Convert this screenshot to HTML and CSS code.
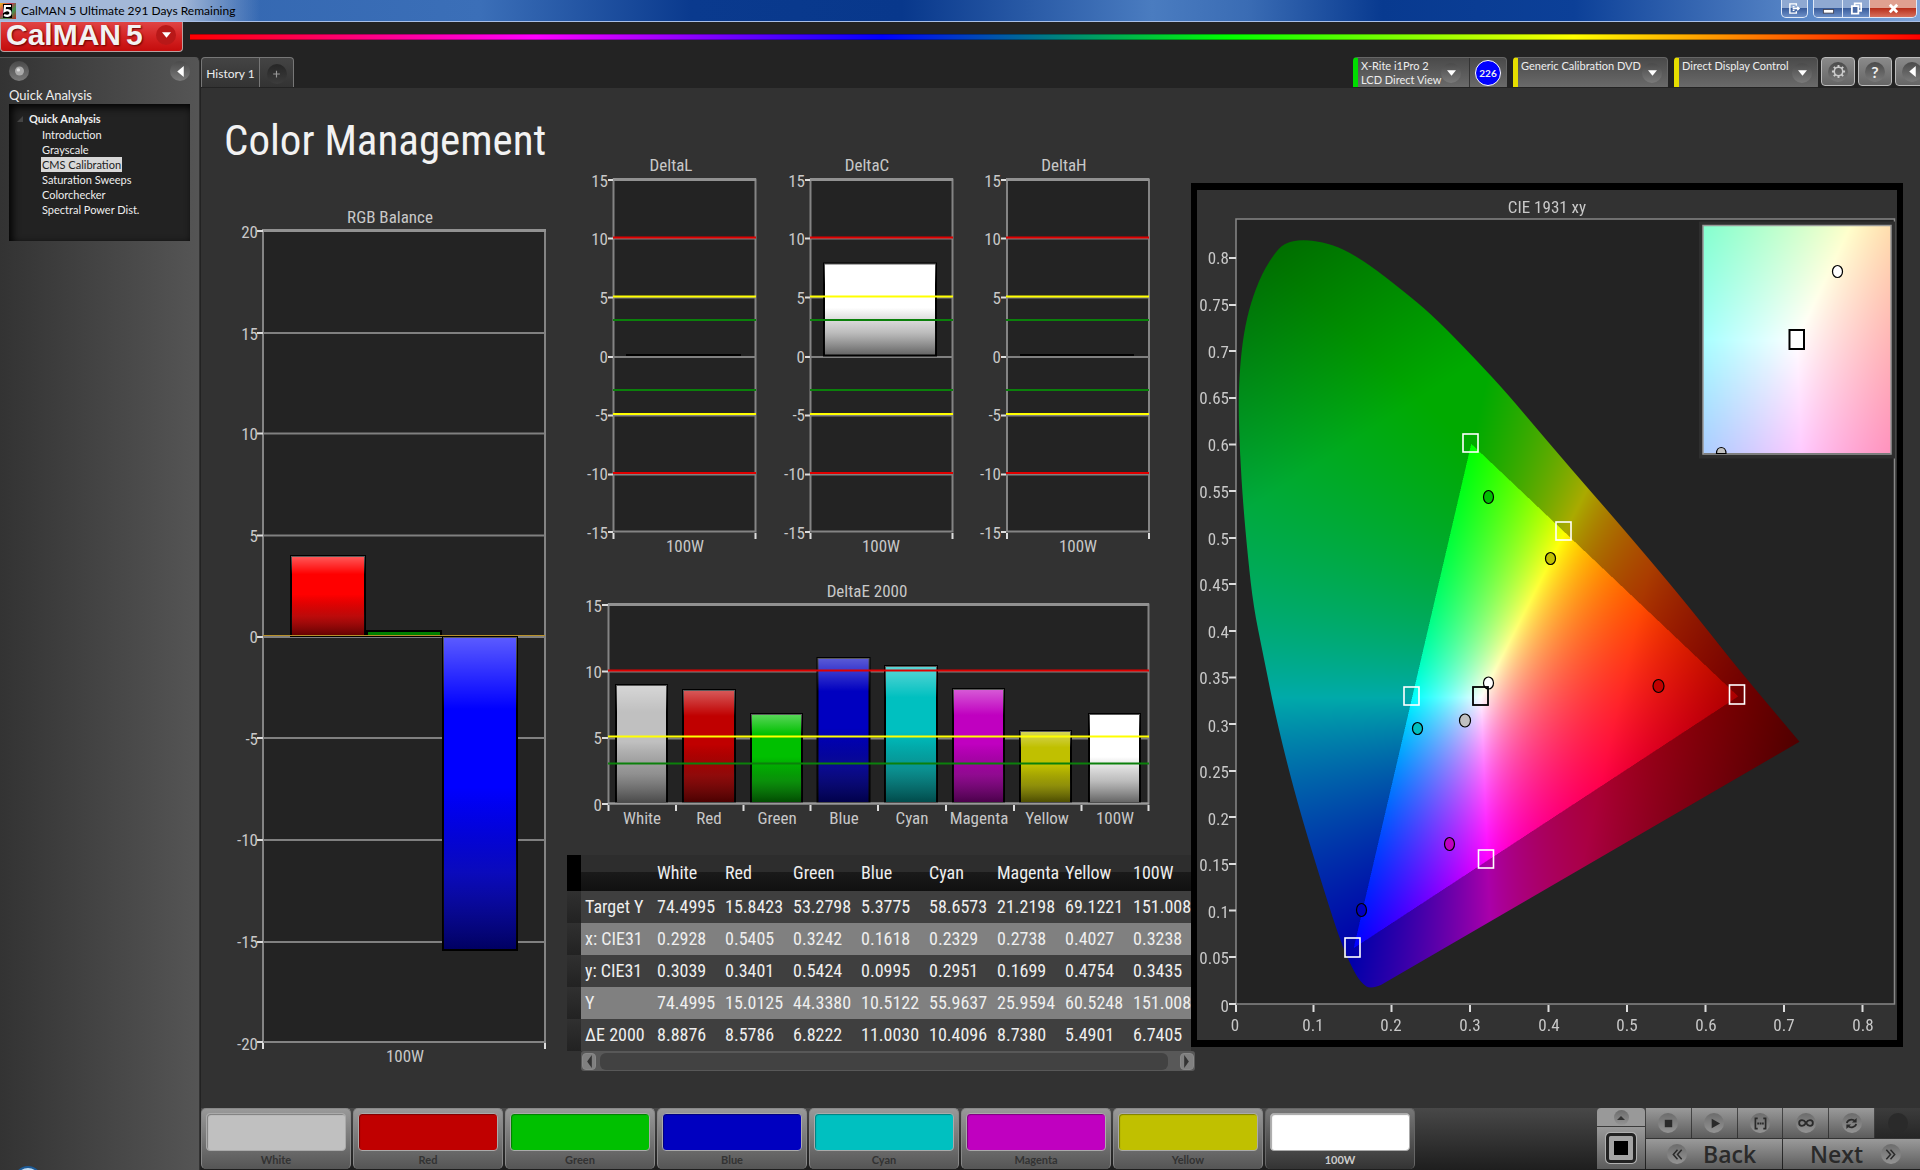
FILE: index.html
```
<!DOCTYPE html>
<html lang="en">
<head>
<meta charset="utf-8">
<meta name="viewport" content="width=device-width, initial-scale=1">
<title>CalMAN 5 Ultimate</title>
<link rel="stylesheet" href="styles.css">
</head>
<body>
<header class="titlebar">
  <svg class="app-icon" viewBox="0 0 16 16" aria-hidden="true">
    <defs><linearGradient id="app-rainbow" x1="0" y1="0" x2="1" y2="1"><stop offset="0" stop-color="#e8c020"/><stop offset=".35" stop-color="#d03050"/><stop offset=".65" stop-color="#3a9a50"/><stop offset="1" stop-color="#c02020"/></linearGradient></defs>
    <rect width="16" height="16" fill="url(#app-rainbow)"/><rect x="3" y="1" width="9" height="14" fill="#000"/>
    <path d="M11 3H5L4.500 8C7 6.500 10.500 7 10.500 10S7 13.500 4 12" fill="none" stroke="#fff" stroke-width="2.200"/>
  </svg>
  <span class="titlebar-text">CalMAN 5 Ultimate 291 Days Remaining</span>
  <div class="window-buttons">
    <button class="win-btn win-switch" aria-label="Switch monitor"><svg viewBox="0 0 14 14"><path d="M9 4V2H2v10h7v-2M5 5h2M5 9h2M5 7h7M10 5l2 2-2 2" fill="none" stroke="#fff" stroke-width="1.500"/></svg></button>
    <div class="win-group">
      <button class="win-btn win-min" aria-label="Minimize"><svg viewBox="0 0 14 14"><rect x="1.500" y="8" width="11" height="4" fill="#fff" stroke="#445"/></svg></button>
      <button class="win-btn win-max" aria-label="Restore"><svg viewBox="0 0 14 14"><path d="M5 1.500h7v8H5z" fill="none" stroke="#fff" stroke-width="1.800"/><path d="M2 4.500h7v8H2z" fill="#4a6aa5" stroke="#fff" stroke-width="2"/></svg></button>
      <button class="win-btn win-close" aria-label="Close"><svg viewBox="0 0 14 14"><path d="M3 3l8 8M11 3l-8 8" stroke="#fff" stroke-width="3"/></svg></button>
    </div>
  </div>
</header>

<div class="brandbar">
  <button class="brand" aria-label="CalMAN 5 menu">
    <span class="brand-name">CalMAN</span><span class="brand-name">5</span>
    <span class="round brand-arrow"><svg viewBox="0 0 10 6"><path d="M0 0h10L5 6z" fill="#fff"/></svg></span>
  </button>
  <div class="rainbow"></div>
</div>

<div class="app">
  <aside class="sidebar">
    <div class="sidebar-tools">
      <button class="round" aria-label="Pin"><svg viewBox="0 0 8 8"><circle cx="4" cy="4" r="4" fill="#aaa"/><circle cx="3" cy="3" r="1.500" fill="#ddd"/></svg></button>
      <button class="round" aria-label="Collapse"><svg class="arrow-left" viewBox="0 0 8 12"><path d="M7 1v10L1 6z" fill="#fff"/></svg></button>
    </div>
    <h2 class="sidebar-title">Quick Analysis</h2>
    <nav class="tree" aria-label="Workflow">
      <p class="tree-root"><svg viewBox="0 0 6 6" aria-hidden="true"><path d="M6 0v6H0z" fill="#444"/></svg>Quick Analysis</p>
      <ul class="tree-list">
        <li><a href="#introduction">Introduction</a></li>
        <li><a href="#grayscale">Grayscale</a></li>
        <li><a href="#cms" class="is-current" aria-current="page">CMS Calibration</a></li>
        <li><a href="#sweeps">Saturation Sweeps</a></li>
        <li><a href="#colorchecker">Colorchecker</a></li>
        <li><a href="#spd">Spectral Power Dist.</a></li>
      </ul>
    </nav>
    <span class="orb"></span>
  </aside>

  <main class="workspace">
    <div class="tabbar">
      <div class="tabs">
        <button class="tab">History 1</button>
        <button class="tab tab-add" aria-label="Add history"><span class="round add-round"><svg viewBox="0 0 8 8"><path d="M4 1v6M1 4h6" stroke="#999" stroke-width="1"/></svg></span></button>
      </div>
      <div class="devices">
        <div class="device device-meter">
          <button class="device-pick"><span>X-Rite i1Pro 2<br>LCD Direct View</span><span class="round"><svg viewBox="0 0 10 6"><path d="M0 0h10L5 6z" fill="#fff"/></svg></span></button>
          <span class="device-count">226</span>
        </div>
        <label class="device device-source"><select aria-label="Source"><option>Generic Calibration DVD</option></select><span class="round"><svg viewBox="0 0 10 6"><path d="M0 0h10L5 6z" fill="#fff"/></svg></span></label>
        <label class="device device-display"><select aria-label="Display"><option>Direct Display Control</option></select><span class="round"><svg viewBox="0 0 10 6"><path d="M0 0h10L5 6z" fill="#fff"/></svg></span></label>
        <button class="tool" aria-label="Settings"><span class="round"><svg class="tool-icon" viewBox="0 0 16 16"><circle cx="8" cy="8" r="4.500" fill="none" stroke="#ccc" stroke-width="1.600"/><path d="M8 1v2.500M8 12.500V15M1 8h2.500M12.500 8H15M3 3l1.800 1.800M11.200 11.200L13 13M13 3l-1.800 1.800M4.800 11.200L3 13" stroke="#ccc" stroke-width="2"/></svg></span></button>
        <button class="tool tool-help" aria-label="Help"><span class="round">?</span></button>
        <button class="tool tool-last" aria-label="Collapse panel"><span class="round"><svg class="arrow-left" viewBox="0 0 8 12"><path d="M7 1v10L1 6z" fill="#fff"/></svg></span></button>
      </div>
    </div>

    <div class="board">
      <section class="col-left">
        <h1 class="page-title">Color Management</h1>
        <svg class="chart" viewBox="201 200 366 880" role="img" aria-label="RGB Balance">
          <defs>
            <linearGradient id="gloss" x1="0" y1="0" x2="0" y2="1">
              <stop offset="0" stop-color="#fff" stop-opacity=".36"/><stop offset=".23" stop-color="#fff" stop-opacity="0"/>
              <stop offset=".48" stop-color="#000" stop-opacity="0"/><stop offset=".75" stop-color="#222" stop-opacity=".3"/><stop offset="1" stop-color="#000" stop-opacity=".62"/>
            </linearGradient>
          </defs>
          <rect class="plot" x="263" y="231" width="282" height="811"/>
          <path class="grid" d="M263 333h282M263 433.500h282M263 535.500h282M263 637h282M263 738h282M263 840h282M263 942h282"/>
          <path class="frame-top" d="M262 230.500h284"/>
          <path class="tick" d="M257 231h6M257 333h6M257 433.500h6M257 535.500h6M257 637h6M257 738h6M257 840h6M257 942h6M257 1042h6M263 1043v6M545 1043v6"/>
          <rect class="bar" x="291" y="556" width="74" height="80" fill="#f00"/><rect x="291" y="556" width="74" height="80" fill="url(#gloss)"/>
          <rect class="bar" x="367" y="631" width="74" height="5" fill="#008000"/>
          <rect class="bar" x="443" y="637" width="74" height="313" fill="#00f"/><rect x="443" y="637" width="74" height="313" fill="url(#gloss)"/>
          <path d="M263 635.500h282" stroke="#b8902a" stroke-width="1"/>
          <g class="label">
            <text x="390" y="223" text-anchor="middle">RGB Balance</text>
            <g text-anchor="end">
              <text x="258" y="238">20</text><text x="258" y="340">15</text><text x="258" y="440">10</text><text x="258" y="542">5</text><text x="258" y="643">0</text>
              <text x="258" y="745">-5</text><text x="258" y="846">-10</text><text x="258" y="948">-15</text><text x="258" y="1050">-20</text>
            </g>
            <text x="405" y="1062" text-anchor="middle">100W</text>
          </g>
        </svg>
      </section>

      <section class="col-mid">
        <div class="deltas">
          <svg class="chart" viewBox="0 0 197 410" role="img" aria-label="DeltaL">
            <rect class="plot" x="38.500" y="29.500" width="142" height="352"/>
            <path class="grid" d="M38 88.500h143M38 147.500h143M38 207h143M38 265.500h143M38 324.500h143"/>
            <path class="frame-top" d="M38 29.500h143"/>
            <path class="tick" d="M33 30h5M33 88.500h5M33 147.500h5M33 207h5M33 265.500h5M33 324.500h5M33 382h5M38.500 383v6M180.500 383v6"/>
            <rect x="51" y="204" width="115" height="2" fill="#000"/>
            <path class="lim-red" d="M38 87.500h143M38 323h143"/><path class="lim-yellow" d="M38 146.500h143M38 264h143"/><path class="lim-green" d="M38 170h143M38 240h143"/>
            <g class="label">
              <text x="96" y="21" text-anchor="middle">DeltaL</text>
              <g text-anchor="end"><text x="33" y="37">15</text><text x="33" y="95">10</text><text x="33" y="154">5</text><text x="33" y="213">0</text><text x="33" y="271">-5</text><text x="33" y="330">-10</text><text x="33" y="389">-15</text></g>
              <text x="110" y="402" text-anchor="middle">100W</text>
            </g>
          </svg>
          <svg class="chart" viewBox="0 0 197 410" role="img" aria-label="DeltaC">
            <rect class="plot" x="38.500" y="29.500" width="142" height="352"/>
            <path class="grid" d="M38 88.500h143M38 147.500h143M38 207h143M38 265.500h143M38 324.500h143"/>
            <path class="frame-top" d="M38 29.500h143"/>
            <path class="tick" d="M33 30h5M33 88.500h5M33 147.500h5M33 207h5M33 265.500h5M33 324.500h5M33 382h5M38.500 383v6M180.500 383v6"/>
            <rect class="bar" x="52" y="113.500" width="112" height="92" fill="#fff"/><rect x="52" y="113.500" width="112" height="92" fill="url(#gloss)"/>
            <path class="lim-red" d="M38 87.500h143M38 323h143"/><path class="lim-yellow" d="M38 146.500h143M38 264h143"/><path class="lim-green" d="M38 170h143M38 240h143"/>
            <g class="label">
              <text x="95" y="21" text-anchor="middle">DeltaC</text>
              <g text-anchor="end"><text x="33" y="37">15</text><text x="33" y="95">10</text><text x="33" y="154">5</text><text x="33" y="213">0</text><text x="33" y="271">-5</text><text x="33" y="330">-10</text><text x="33" y="389">-15</text></g>
              <text x="109" y="402" text-anchor="middle">100W</text>
            </g>
          </svg>
          <svg class="chart" viewBox="0 0 197 410" role="img" aria-label="DeltaH">
            <rect class="plot" x="38" y="29.500" width="142" height="352"/>
            <path class="grid" d="M37 88.500h143M37 147.500h143M37 207h143M37 265.500h143M37 324.500h143"/>
            <path class="frame-top" d="M37 29.500h143"/>
            <path class="tick" d="M32 30h5M32 88.500h5M32 147.500h5M32 207h5M32 265.500h5M32 324.500h5M32 382h5M38 383v6M180 383v6"/>
            <rect x="51" y="204" width="114" height="2" fill="#000"/>
            <path class="lim-red" d="M37 87.500h143M37 323h143"/><path class="lim-yellow" d="M37 146.500h143M37 264h143"/><path class="lim-green" d="M37 170h143M37 240h143"/>
            <g class="label">
              <text x="95" y="21" text-anchor="middle">DeltaH</text>
              <g text-anchor="end"><text x="32" y="37">15</text><text x="32" y="95">10</text><text x="32" y="154">5</text><text x="32" y="213">0</text><text x="32" y="271">-5</text><text x="32" y="330">-10</text><text x="32" y="389">-15</text></g>
              <text x="109" y="402" text-anchor="middle">100W</text>
            </g>
          </svg>
        </div>

        <svg class="chart" viewBox="567 560 624 280" role="img" aria-label="DeltaE 2000">
          <rect class="plot" x="608.500" y="604.500" width="540" height="199"/>
          <path class="grid" d="M609 671.500h540M609 738.500h540"/>
          <path class="frame-top" d="M608 604.500h541"/>
          <path class="tick" d="M602 605h6M602 671.500h6M602 738h6M602 804h6M608.500 805v6M676 805v6M743.500 805v6M810.500 805v6M878 805v6M946 805v6M1014 805v6M1081.500 805v6M1148.500 805v6"/>
          <g class="bar"><rect x="616" y="685" width="51" height="118" fill="#c0c0c0"/><rect x="683" y="690" width="52" height="113" fill="#c00000"/><rect x="751" y="714" width="51" height="89" fill="#00c000"/><rect x="817.500" y="658" width="52" height="145" fill="#0000c0"/><rect x="885" y="666" width="52" height="137" fill="#00c0c0"/><rect x="953" y="689" width="51" height="114" fill="#c000c0"/><rect x="1020" y="731" width="51" height="72" fill="#c0c000"/><rect x="1089" y="714" width="51" height="89" fill="#fff"/></g>
          <g fill="url(#gloss)"><rect x="616" y="685" width="51" height="118"/><rect x="683" y="690" width="52" height="113"/><rect x="751" y="714" width="51" height="89"/><rect x="817.500" y="658" width="52" height="145"/><rect x="885" y="666" width="52" height="137"/><rect x="953" y="689" width="51" height="114"/><rect x="1020" y="731" width="51" height="72"/><rect x="1089" y="714" width="51" height="89"/></g>
          <path d="M608 803.500h541" stroke="#999" stroke-width="2"/>
          <path class="lim-red" d="M608 670.500h541"/><path class="lim-yellow" d="M608 736.500h541"/><path class="lim-green" d="M608 763.500h541"/>
          <g class="label">
            <g text-anchor="end"><text x="602" y="612">15</text><text x="602" y="678">10</text><text x="602" y="744">5</text><text x="602" y="811">0</text></g>
            <g text-anchor="middle">
              <text x="867" y="597">DeltaE 2000</text>
              <text x="642" y="824">White</text><text x="709" y="824">Red</text><text x="777" y="824">Green</text><text x="844" y="824">Blue</text><text x="912" y="824">Cyan</text><text x="979" y="824">Magenta</text><text x="1047" y="824">Yellow</text><text x="1115" y="824">100W</text>
            </g>
          </g>
        </svg>

        <div class="readings">
          <table>
            <colgroup><col class="c-grip"><col class="c-name"><col span="8" class="c-val"></colgroup>
            <thead><tr><td class="grip"></td><td></td><th scope="col">White</th><th scope="col">Red</th><th scope="col">Green</th><th scope="col">Blue</th><th scope="col">Cyan</th><th scope="col">Magenta</th><th scope="col">Yellow</th><th scope="col">100W</th></tr></thead>
            <tbody>
              <tr><td class="grip"></td><th scope="row">Target Y</th><td>74.4995</td><td>15.8423</td><td>53.2798</td><td>5.3775</td><td>58.6573</td><td>21.2198</td><td>69.1221</td><td>151.008</td></tr>
              <tr><td class="grip"></td><th scope="row">x: CIE31</th><td>0.2928</td><td>0.5405</td><td>0.3242</td><td>0.1618</td><td>0.2329</td><td>0.2738</td><td>0.4027</td><td>0.3238</td></tr>
              <tr><td class="grip"></td><th scope="row">y: CIE31</th><td>0.3039</td><td>0.3401</td><td>0.5424</td><td>0.0995</td><td>0.2951</td><td>0.1699</td><td>0.4754</td><td>0.3435</td></tr>
              <tr><td class="grip"></td><th scope="row">Y</th><td>74.4995</td><td>15.0125</td><td>44.3380</td><td>10.5122</td><td>55.9637</td><td>25.9594</td><td>60.5248</td><td>151.008</td></tr>
              <tr><td class="grip"></td><th scope="row">ΔE 2000</th><td>8.8876</td><td>8.5786</td><td>6.8222</td><td>11.0030</td><td>10.4096</td><td>8.7380</td><td>5.4901</td><td>6.7405</td></tr>
            </tbody>
          </table>
        </div>
        <div class="hscroll">
          <button class="hscroll-btn" aria-label="Scroll left"><svg viewBox="0 0 6 14"><path d="M6 0v14L1 7z" fill="#333"/></svg></button>
          <span class="hscroll-thumb"></span>
          <button class="hscroll-btn" aria-label="Scroll right"><svg viewBox="0 0 6 14"><path d="M0 0v14l5-7z" fill="#333"/></svg></button>
        </div>
      </section>

      <section class="cie">
        <svg class="chart" viewBox="1197 190 700 850" aria-hidden="true"><rect x="1236" y="218.500" width="658" height="785.500" fill="#232323"/></svg>
        <canvas class="cie-gamut" id="gamut" width="1318" height="1572"></canvas>
        <svg class="chart cie-overlay" viewBox="1197 190 700 850" role="img" aria-label="CIE 1931 xy">
          <rect x="1236" y="219" width="658.500" height="785" fill="none" stroke="#888" stroke-width="1.500"/>
          <path class="tick" d="M1229 258h7M1229 305h7M1229 351h7M1229 398h7M1229 444.500h7M1229 491h7M1229 538h7M1229 584h7M1229 631h7M1229 677.500h7M1229 724h7M1229 771h7M1229 817h7M1229 864h7M1229 910.500h7M1229 957h7M1229 1004h7M1236 1005v7M1313.500 1005v7M1391.500 1005v7M1470 1005v7M1548.500 1005v7M1627 1005v7M1705.500 1005v7M1784 1005v7M1862.500 1005v7"/>
          <path d="M1699 221.500h196v237h-196z M1703 226v227h188v-227z" fill="#2e2e2e" fill-rule="evenodd"/>
          <rect x="1703" y="225.500" width="188" height="228.500" fill="none" stroke="#999" stroke-width="1.500"/>
          <g fill="none" stroke="#fff" stroke-width="1.600">
            <rect x="1463" y="434" width="15" height="18"/><rect x="1556" y="522" width="15" height="18"/><rect x="1404" y="687" width="15" height="18"/><rect x="1729.500" y="685" width="15" height="19"/><rect x="1478.500" y="850" width="15" height="18"/><rect x="1345" y="938" width="15" height="19"/>
          </g>
          <g stroke="#000" stroke-width="1.200">
            <ellipse cx="1488.500" cy="683" rx="5" ry="6" fill="#fff"/>
            <ellipse cx="1488.500" cy="497" rx="5" ry="6.500" fill="#00c000"/><ellipse cx="1550.500" cy="558.500" rx="5" ry="6" fill="#c0c000"/><ellipse cx="1465" cy="720.500" rx="5.500" ry="6.500" fill="#c0c0c0"/><ellipse cx="1417.500" cy="728.500" rx="5" ry="6" fill="#00c0c0"/><ellipse cx="1658.500" cy="686" rx="5.500" ry="6.500" fill="#c00000"/><ellipse cx="1449.500" cy="844" rx="5" ry="6.500" fill="#c000c0"/><ellipse cx="1361.500" cy="910" rx="5" ry="6.500" fill="#0000c0"/>
            <ellipse cx="1837.500" cy="271.500" rx="5" ry="6" fill="#fff"/><path d="M1716.500 453.500c0-8 9.500-8 9.500 0z" fill="#c0c0c0"/>
          </g>
          <rect x="1473" y="687" width="15" height="18" fill="none" stroke="#000" stroke-width="1.800"/>
          <rect x="1789.500" y="330" width="14.500" height="19" fill="#fff" stroke="#000" stroke-width="2"/>
          <g class="label">
            <g text-anchor="middle">
              <text x="1547" y="213">CIE 1931 xy</text>
              <text x="1235" y="1031">0</text><text x="1313" y="1031">0.1</text><text x="1391" y="1031">0.2</text><text x="1470" y="1031">0.3</text><text x="1549" y="1031">0.4</text><text x="1627" y="1031">0.5</text><text x="1706" y="1031">0.6</text><text x="1784" y="1031">0.7</text><text x="1863" y="1031">0.8</text>
            </g>
            <g text-anchor="end">
              <text x="1229" y="264">0.8</text><text x="1229" y="311">0.75</text><text x="1229" y="358">0.7</text><text x="1229" y="404">0.65</text><text x="1229" y="451">0.6</text><text x="1229" y="498">0.55</text><text x="1229" y="545">0.5</text><text x="1229" y="591">0.45</text><text x="1229" y="638">0.4</text><text x="1229" y="684">0.35</text><text x="1229" y="732">0.3</text><text x="1229" y="778">0.25</text><text x="1229" y="825">0.2</text><text x="1229" y="871">0.15</text><text x="1229" y="918">0.1</text><text x="1229" y="964">0.05</text><text x="1229" y="1012">0</text>
            </g>
          </g>
        </svg>
      </section>
    </div>

    <footer class="dock">
      <div class="swatches">
        <button class="swatch"><span class="chip chip-white"></span>White</button>
        <button class="swatch"><span class="chip chip-red"></span>Red</button>
        <button class="swatch"><span class="chip chip-green"></span>Green</button>
        <button class="swatch"><span class="chip chip-blue"></span>Blue</button>
        <button class="swatch"><span class="chip chip-cyan"></span>Cyan</button>
        <button class="swatch"><span class="chip chip-magenta"></span>Magenta</button>
        <button class="swatch"><span class="chip chip-yellow"></span>Yellow</button>
        <button class="swatch is-active"><span class="chip chip-full"></span>100W</button>
      </div>
      <div class="player">
        <div class="player-side">
          <button class="key key-up" aria-label="Expand"><span class="disc disc-small"><svg viewBox="0 0 10 6"><path d="M0 6h10L5 1z" fill="#333"/></svg></span></button>
          <button class="key key-pattern" aria-label="Pattern window"><svg viewBox="0 0 34 34"><rect x="2" y="2" width="30" height="30" rx="4" fill="#999" stroke="#b0b0b0" stroke-width="2"/><rect x="3.500" y="3.500" width="27" height="27" rx="3" fill="#a4a4a4" stroke="#222" stroke-width="3"/><rect x="10" y="10" width="14" height="14" fill="#000"/></svg></button>
        </div>
        <div class="player-keys">
          <button class="key" aria-label="Stop"><span class="disc"><svg viewBox="0 0 14 14"><rect x="3" y="3" width="8" height="8" fill="#2a2a2a"/></svg></span></button>
          <button class="key" aria-label="Play"><span class="disc"><svg viewBox="0 0 14 14"><path d="M4 2l9 5-9 5z" fill="#2a2a2a"/></svg></span></button>
          <button class="key" aria-label="Read range"><span class="disc"><svg viewBox="0 0 14 14"><path d="M4 1.500H1.500v11H4M10 1.500h2.500v11H10" fill="none" stroke="#2a2a2a" stroke-width="1.800"/><path d="M3.500 7h7" stroke="#2a2a2a" stroke-width="2" stroke-dasharray="2 .6"/></svg></span></button>
          <button class="key" aria-label="Continuous"><span class="disc"><svg class="icon-wide" viewBox="0 0 14 14"><path d="M7 7C5.500 4.500 4.500 4.500 3.500 4.500a2.500 2.500 0 0 0 0 5C4.500 9.500 5.500 9.500 7 7s2.500-2.500 3.500-2.500a2.500 2.500 0 0 1 0 5C9.500 9.500 8.500 9.500 7 7z" fill="none" stroke="#2a2a2a" stroke-width="1.600"/></svg></span></button>
          <button class="key" aria-label="Refresh"><span class="disc"><svg viewBox="0 0 14 14"><path d="M2 6.500C2.500 3 8 1.500 11 4.500M12 7.500C11.500 11 6 12.500 3 9.500" fill="none" stroke="#2a2a2a" stroke-width="1.800"/><path d="M12.500 1v5h-5zM1.500 13V8h5z" fill="#2a2a2a"/></svg></span></button>
          <button class="key key-off" aria-label="Unused" disabled><span class="disc"></span></button>
          <button class="key key-nav"><span class="disc"><svg viewBox="0 0 14 14"><path d="M7 2L2.500 7 7 12M11.500 2L7 7l4.500 5" fill="none" stroke="#2a2a2a" stroke-width="1.600"/></svg></span>Back</button>
          <button class="key key-nav key-next">Next<span class="disc"><svg viewBox="0 0 14 14"><path d="M2.500 2L7 7l-4.500 5M7 2l4.500 5L7 12" fill="none" stroke="#2a2a2a" stroke-width="1.600"/></svg></span></button>
        </div>
      </div>
    </footer>
  </main>
</div>
<script src="gamut.js"></script>
</body>
</html>
```
FILE: styles.css
```
:root {
  --narrow: "Roboto Condensed", Roboto, sans-serif;
  --ui: Lato, "Open Sans", sans-serif;
}
* { box-sizing: border-box; }
body {
  margin: 0;
  min-height: 100vh;
  display: flex;
  flex-direction: column;
  overflow-x: hidden;
  background: #232323;
  color: #eee;
  font: 12px/15px var(--ui);
}
button { border: 0; padding: 0; margin: 0; background: none; color: inherit; font: inherit; }
h1, h2, p, ul { margin: 0; padding: 0; font-weight: 400; }
a { color: inherit; text-decoration: none; }
svg { display: block; }

.titlebar {
  height: 22px;
  display: flex;
  align-items: center;
  gap: 5px;
  border-bottom: 1px solid #a9bfe6;
  background:
    linear-gradient(90deg, #a3b8d8 0, #a3b8d8 180px, rgba(163, 184, 216, 0) 260px),
    linear-gradient(90deg, #2f62ac 0, #3b6fb8 25%, #0a3a8e 36%, #08388c 47%, #4a7cc0 60%, #3a6cb4 65%, #083a90 72%, #0c4098 82%, #5a88c8 94%, #7fa4d8 100%);
}
.app-icon { width: 16px; height: 16px; }
.titlebar-text { flex: 1; color: #000; }
.window-buttons { align-self: flex-start; display: flex; gap: 5px; margin-right: 3px; }
.win-group { display: flex; border: 1px solid #dfe9f8; border-top: 0; border-radius: 0 0 5px 5px; overflow: hidden; }
.win-btn { height: 17px; width: 27px; display: grid; place-items: center; background: linear-gradient(#8fa9d2 50%, #3a5d9c 50%, #6d90c8); }
.win-btn + .win-btn { border-left: 1px solid #dfe9f8; }
.win-btn svg { width: 13px; height: 13px; }
.win-switch { border: 1px solid #dfe9f8; border-top: 0; border-radius: 0 0 5px 5px; height: 18px; }
.win-min { width: 28px; }
.win-close { width: 47px; background: linear-gradient(#e0a090 45%, #b8301c 50%, #d8705c); }

.brandbar { height: 35px; display: flex; align-items: flex-start; gap: 7px; }
.brand {
  width: 183px;
  height: 30px;
  display: flex;
  align-items: center;
  padding: 0 0 3px 5px;
  border: 1px solid #b9a0a0;
  border-width: 0 1px 1px;
  border-radius: 0 0 4px 4px;
  background: linear-gradient(#e04444, #d42424 50%, #c40c0c);
  color: #f2f2f2;
  text-shadow: 1px 1px 2px #600;
  font: 700 30px/26px "Liberation Sans", sans-serif;
}
.brand-name + .brand-name { margin-left: 5px; }
.brand .brand-arrow { margin-left: auto; margin-right: 6px; background: #b81818; }
.rainbow {
  flex: 1;
  height: 6px;
  margin-top: 12px;
  border: 1px solid rgba(0, 0, 0, .3);
  border-width: 1px 0;
  background: linear-gradient(90deg, #f00, #f0f 20%, #00f 40%, #0f0 60%, #ff0 80%, #f00);
}

.round {
  flex: none;
  width: 20px;
  height: 20px;
  border-radius: 50%;
  display: grid;
  place-items: center;
  background: linear-gradient(#4a4a4a, #7a7a7a);
}
.round svg { width: 9px; height: 10px; }
.round .arrow-left { width: 9px; height: 13px; }

.app { flex: 1; display: grid; grid-template-columns: 200px minmax(0, 1fr); }
.sidebar {
  position: relative;
  overflow: hidden;
  padding: 3px 9px;
  border-right: 1px solid #333;
  border-top: 1px solid #555;
  border-radius: 0 5px 0 0;
  background: linear-gradient(90deg, #333, #555);
}
.sidebar-tools { display: flex; justify-content: space-between; }
.sidebar-title { padding-top: 5px; font-size: 13px; line-height: 18px; height: 23px; }
.tree {
  height: 137px;
  padding: 7px 0 0 8px;
  background: #222;
  box-shadow: inset 3px 3px 8px #000;
  font-size: 11px;
}
.tree-root { display: flex; align-items: center; gap: 6px; font-weight: 700; line-height: 16px; }
.tree-root svg { width: 6px; height: 6px; }
.tree-list { list-style: none; padding-left: 24px; }
.tree-list li { height: 15px; }
.tree-list a { display: inline-block; padding: 0 1px; }
.tree-list .is-current { background: #d8d8d8; color: #222; }
.orb { position: absolute; left: 14px; bottom: -24px; width: 28px; height: 28px; border-radius: 50%; border: 2px solid #1c5a96; background: #c4dcf0; }

.workspace { display: flex; flex-direction: column; min-width: 0; border-left: 1px solid #222; background: #232323; }
.tabbar { height: 31px; display: flex; justify-content: space-between; align-items: flex-start; overflow: hidden; }
.tabs { display: flex; height: 30px; border: 1px solid #777; border-bottom: 0; border-radius: 4px 4px 0 0; background: linear-gradient(#444, #333); }
.tab { width: 57px; padding-top: 2px; }
.tab-add { width: 34px; border-left: 1px solid #777; display: grid; place-items: center; }
.add-round { background: linear-gradient(#262626, #3c3c3c); }

.devices { display: flex; gap: 6px; font-size: 11px; line-height: 14px; }
.device {
  position: relative;
  display: flex;
  height: 30px;
  border: 1px solid #666;
  border-left: 5px solid #e6de00;
  border-bottom: 0;
  border-radius: 4px 4px 0 0;
  background: linear-gradient(#4a4a4a, #6a6a6a);
}
.device-meter { width: 154px; border-left-color: #0d0; }
.device-source { width: 155px; }
.device-display { width: 144px; }
.device-pick { width: 112px; display: flex; align-items: center; justify-content: space-between; padding: 0 8px 0 3px; border-right: 1px solid #333; text-align: left; white-space: nowrap; }
.device select {
  appearance: none;
  flex: 1;
  min-width: 0;
  height: 15px;
  padding: 0 0 0 3px;
  border: 0;
  background: none;
  color: inherit;
  font: inherit;
}
.device .round { align-self: center; }
.device-source .round, .device-display .round { position: absolute; right: 5px; top: 5px; }
.device-count { margin: auto; width: 26px; height: 26px; border: 1px solid #fff; border-radius: 50%; background: #00f; font-size: 10px; font-weight: 700; line-height: 24px; text-align: center; }
.tool { width: 34px; height: 29px; margin-left: -3px; display: grid; place-items: center; border: 1px solid #bbb; border-radius: 4px; background: linear-gradient(#8a8a8a, #666); font: 700 16px/20px var(--ui); }
.tool-last { margin-right: -9px; }
.round .tool-icon { width: 15px; height: 15px; }

.board {
  flex: 1;
  display: grid;
  grid-template-columns: 366fr 624fr 712fr;
  align-items: start;
  padding-right: 17px;
  background: #323232;
}
.board > * { min-width: 0; }
.page-title { height: 112px; padding: 26px 0 0 23px; font: 43px/52px var(--narrow); color: #f2f2f2; white-space: nowrap; }
.chart { width: 100%; height: auto; font-family: var(--narrow); }
.col-mid { padding-top: 62px; }
.deltas { display: grid; grid-template-columns: repeat(3, 1fr); padding: 0 25px 0 8px; }
.plot { fill: #232323; stroke: #848484; stroke-width: 2; }
.grid { fill: none; stroke: #808080; stroke-width: 2; }
.frame-top { stroke: #919191; stroke-width: 3; }
.tick { fill: none; stroke: #ddd; stroke-width: 2; }
.bar { stroke: #000; stroke-width: 2; }
.label { fill: #c8c8c8; font-size: 17px; }
.lim-red { stroke: #e00000; stroke-width: 2; }
.lim-yellow { stroke: #ff0; stroke-width: 2; }
.lim-green { stroke: #0b800b; stroke-width: 2; }

.readings { margin-top: 15px; overflow: hidden; }
table { width: 100%; min-width: 630px; table-layout: fixed; border-collapse: collapse; font: 18px/32px var(--narrow); }
.c-grip { width: 14px; }
.c-name { width: 72px; }
.c-val { width: 68px; }
th, td { height: 32px; padding: 0 0 0 4px; line-height: 32px; font-weight: 400; text-align: left; white-space: nowrap; }
thead tr { background: linear-gradient(#2d2d2d 48%, #1a1a1a 48%, #101010); }
thead th { height: 36px; }
tbody tr { background: #3f3f3f; }
tbody tr:nth-child(even) { background: #808080; }
.grip { padding: 0; background: linear-gradient(#303030, #222); }
thead .grip { background: #000; }
.hscroll { position: relative; display: flex; align-items: center; gap: 4px; height: 20px; margin: 0 -4px 0 14px; padding: 0 1px; border-radius: 3px; background: #585858; }
.hscroll-btn { width: 14px; height: 17px; display: grid; place-items: center; border: 1px solid #888; border-radius: 4px; background: #808080; }
.hscroll-btn svg { width: 6px; height: 13px; }
.hscroll-thumb { flex: 1; height: 17px; margin-right: 8px; border-radius: 6px; background: #424242; }

.cie { position: relative; margin-top: 95px; border: solid #000; border-width: 7px 6px; background: #323232; }
.cie-gamut { position: absolute; left: 5.571%; top: 3.294%; width: 94.143%; height: 92.471%; }
.cie-overlay { position: absolute; inset: 0; }

.dock { height: 62px; display: flex; justify-content: space-between; background: linear-gradient(#484848, #1e1e1e); }
.swatches { display: flex; gap: 2px; }
.swatch {
  width: 150px;
  height: 61px;
  padding: 4px 4px 0;
  display: flex;
  flex-direction: column;
  align-items: center;
  border: 1px solid #888;
  border-width: 1px 1px 0;
  border-radius: 5px;
  background: linear-gradient(#999, #555);
  color: #333;
  font-size: 11px;
  font-weight: 700;
  line-height: 18px;
}
.swatch.is-active { border-color: #666; background: linear-gradient(#777, #333); color: #ccc; }
.chip { width: 100%; height: 38px; border: 1px solid #aaa; border-radius: 4px; box-shadow: inset 1px 1px 1px rgba(0, 0, 0, .35); }
.chip-white { background: #c0c0c0; }
.chip-red { background: #c00000; }
.chip-green { background: #00c000; }
.chip-blue { background: #0000c0; }
.chip-cyan { background: #00c0c0; }
.chip-magenta { background: #c000c0; }
.chip-yellow { background: #c0c000; }
.chip-full { background: #fff; }

.player { display: flex; gap: 1px; }
.player-side { width: 48px; height: 61px; display: grid; grid-template-rows: 18px 1fr; gap: 1px; }
.player-keys { width: 274px; height: 61px; display: grid; grid-template-columns: repeat(6, 1fr); grid-template-rows: 30px 30px; gap: 1px; }
.key { display: grid; place-items: center; background: linear-gradient(#9a9a9a, #5c5c5c); color: #2a2a2a; }
.key-up { border-radius: 4px 4px 0 0; background: #999; }
.key-pattern svg { width: 34px; height: 34px; }
.key-off { background: linear-gradient(#3c3c3c, #262626); }
.key-nav { grid-column: span 3; display: flex; align-items: center; justify-content: flex-start; gap: 16px; padding-left: 21px; font: 600 23px/28px "Open Sans", sans-serif; }
.key-next { justify-content: flex-end; gap: 18px; padding: 0 19px 0 0; }
.disc { width: 20px; height: 20px; border-radius: 50%; display: grid; place-items: center; background: linear-gradient(#6c6c6c, #949494); }
.disc svg { width: 13px; height: 13px; }
.disc .icon-wide { width: 16px; height: 16px; }
.disc-small { width: 15px; height: 15px; }
.disc-small svg { width: 8px; height: 5px; }
.key-off .disc { background: #2a2a2a; }
```
FILE: gamut.js
```
// Fills the chromaticity diagram and the magnified white-point inset.
(function () {
  var canvas = document.getElementById('gamut');
  var ctx = canvas.getContext('2d');
  var S = 2, W = 659, H = 786, UX = 783.4, UY = 932, BASE = 785.7;

  var locus = [
    [.185, .020], [.1717, .0155], [.1608, .0218], [.1518, .0325], [.1367, .0594], [.1187, .1041],
    [.0795, .2114], [.0524, .3008], [.0345, .3750], [.0223, .4260], [.0151, .4796], [.0090, .5368],
    [.0050, .5905], [.0030, .6441], [.0050, .6835], [.0098, .7192], [.0185, .7514], [.0330, .7836],
    [.0524, .8090], [.0650, .8170], [.0843, .8198], [.1096, .8175], [.1367, .8100], [.1700, .7932],
    [.2120, .7657], [.2482, .7407], [.2904, .7049], [.3386, .6620], [.3747, .6262], [.4289, .5726],
    [.4831, .5207], [.5554, .4492], [.6036, .3991], [.6422, .3580], [.7193, .2811]
  ];

  // Linear RGB of a chromaticity, scaled so that the largest channel is 1.
  function colour(x, y) {
    y = Math.max(y, .0001);
    var X = x / y, Z = (1 - x - y) / y;
    var r = 3.2406 * X - 1.5372 - .4986 * Z;
    var g = -.9689 * X + 1.8758 + .0415 * Z;
    var b = .0557 * X - .2040 + 1.0570 * Z;
    var out = r < -.002 || g < -.002 || b < -.002;
    var m = Math.max(r, g, b);
    var f = out ? .667 : 1;
    var red = x - (.45 + (y - .18) * .27);
    if (red > 0) f *= Math.max(.4, 1 - 2.2 * red);
    var green = y - .68 - (x - .29) * .54;
    if (green > 0) f *= Math.max(.6, 1 - 1.35 * green);
    return [Math.max(r, 0) / m * f, Math.max(g, 0) / m * f, Math.max(b, 0) / m * f];
  }

  function tile(w, h, toXY) {
    var c = document.createElement('canvas');
    c.width = w; c.height = h;
    var t = c.getContext('2d'), img = t.createImageData(w, h), p = 0;
    for (var j = 0; j < h; j++) {
      for (var i = 0; i < w; i++) {
        var xy = toXY(i, j), k = colour(xy[0], xy[1]);
        img.data[p++] = k[0] * 255;
        img.data[p++] = k[1] * 255;
        img.data[p++] = k[2] * 255;
        img.data[p++] = 255;
      }
    }
    t.putImageData(img, 0, 0);
    return c;
  }

  ctx.save();
  ctx.beginPath();
  var n = locus.length;
  function px(i) { return locus[i][0] * UX * S; }
  function py(i) { return (BASE - locus[i][1] * UY) * S; }
  ctx.moveTo(px(0), py(0));
  for (var i = 1; i < n - 1; i++) {
    ctx.quadraticCurveTo(px(i), py(i), (px(i) + px(i + 1)) / 2, (py(i) + py(i + 1)) / 2);
  }
  ctx.lineTo(px(n - 1), py(n - 1));
  ctx.closePath();
  ctx.clip();
  ctx.drawImage(tile(W * S, H * S, function (i, j) {
    return [i / S / UX, (BASE - j / S) / UY];
  }), 0, 0);
  ctx.restore();

  ctx.drawImage(tile(380, 460, function (i, j) {
    return [.3127 + (i / 2 - 94.8) / 3658, .329 - (j / 2 - 114.3) / 4690];
  }), 466 * S, 7 * S);
})();
```
